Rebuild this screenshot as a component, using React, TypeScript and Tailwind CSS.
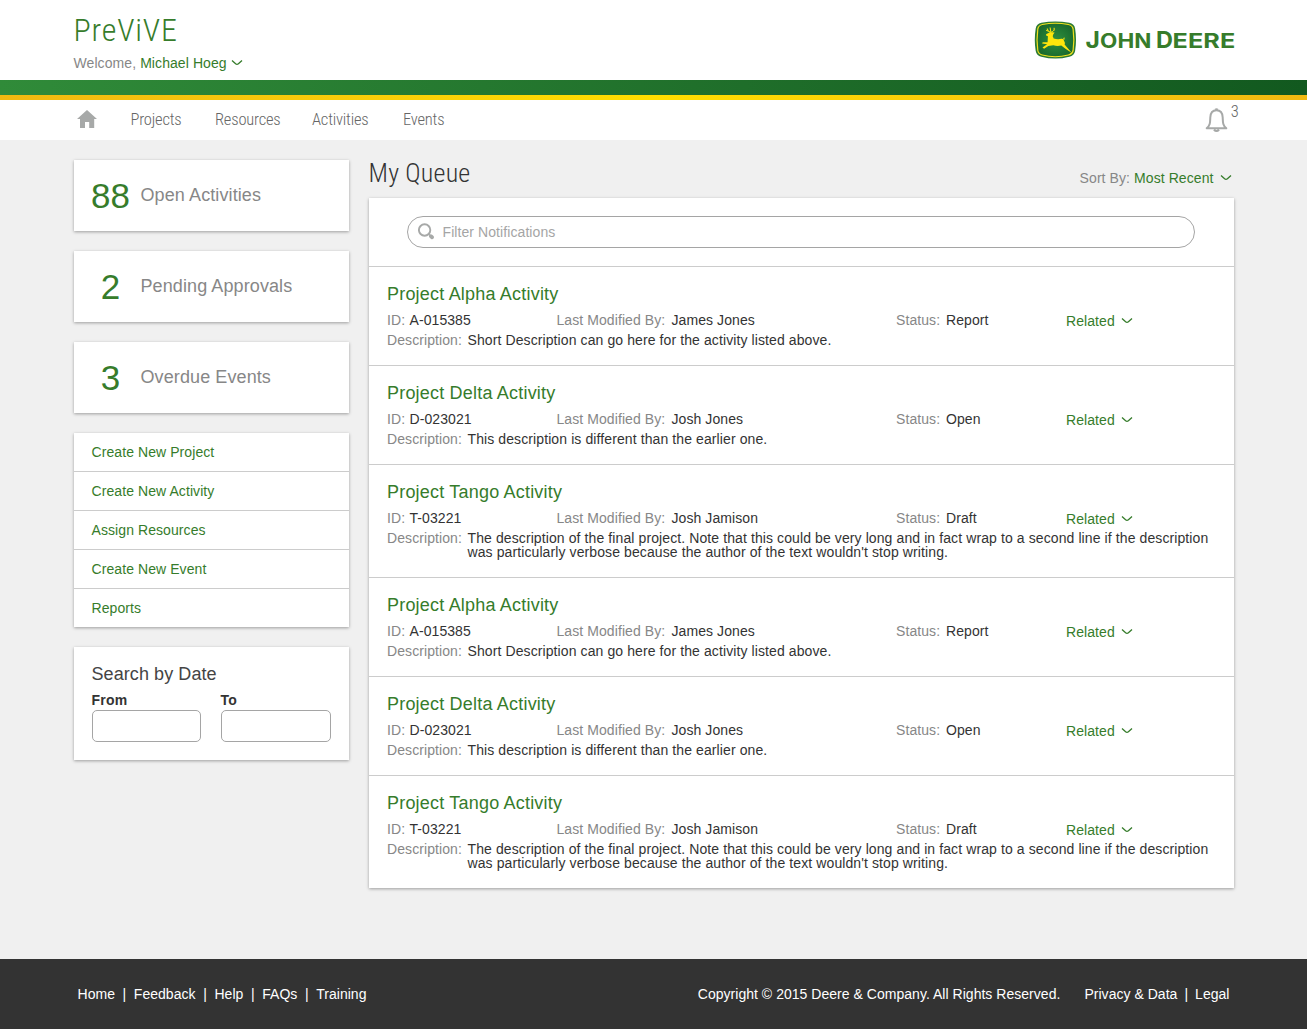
import React from "react";

function Chevron({ className = "" }: { className?: string }) {
  return (
    <svg className={className} width="12" height="8" viewBox="0 0 12 8" fill="none" stroke="#367c2b" strokeWidth="1.3">
      <path d="M1 1.4 L4.6 4.7 Q6 5.9 7.4 4.7 L11 1.4" />
    </svg>
  );
}

function Logo() {
  return (
    <svg width="200" height="38" viewBox="0 0 200 38" className="overflow-visible">
      <defs>
        <radialGradient id="shield" cx="50%" cy="50%" r="60%">
          <stop offset="0" stopColor="#2f8f3d" />
          <stop offset="1" stopColor="#17662c" />
        </radialGradient>
      </defs>
      <g transform="translate(-0.7 0)">
        <path d="M7 1.8 Q21 -1 35 1.8 Q40 2.8 40.8 7.5 Q42.6 19 40.8 30 Q40 34.500 35 35.7 Q21 39.5 7 35.7 Q2.2 34.5 1.4 30 Q-.4 19 1.4 7.5 Q2.2 2.8 7 1.8Z" fill="#2b7a34" />
        <path d="M8 3.5 Q21 1 34 3.5 Q38 4.3 38.800 8 Q40.300 19 38.800 29.5 Q38 33 34 34 Q21 37.5 8 34 Q4.2 33 3.5 29.5 Q2 19 3.5 8 Q4.3 4.3 8 3.5Z" fill="url(#shield)" stroke="#f0e01d" strokeWidth="1.2" />
        <g fill="none" stroke="#ffe60c" strokeWidth="1">
          <path d="M16.6 11.5 Q12.800 10.500 13 7.500 M14.200 10.300 L11.800 9.200 M16.600 11.300 L15.800 6.500 M17 11 Q20.500 10 19.800 6.800 M19.500 9.300 L20.300 9" />
        </g>
        <path d="M11.800 13.300 L15.500 11.300 L18 11.200 L20.300 11.500 L19 13.200 L18.400 15.200 L19.400 17.400 Q23.500 18.800 27 17.700 Q29.500 17.300 29.600 19.500 Q31 21.500 30.300 23.600 L33.300 27 L37.300 31.700 L31.500 28 L27 24.600 Q22.500 25.300 19 24.300 L14 24.900 L9.800 27.700 L8.200 26.400 L12.800 23.300 L7.800 22.600 L8.400 21.200 L13.300 21.200 L13.600 15.200 L11.800 14.600Z" fill="#ffe60c" />
        <path d="M28.700 18.300 L29.900 16 L30.400 18.600Z" fill="#ffe60c" />
      </g>
      <g fill="#367c2b" fontFamily="Inter" fontWeight="650">
        <text x="50.500" y="27.4" fontSize="23.500" textLength="14.500" lengthAdjust="spacingAndGlyphs">J</text>
        <text x="65" y="27.4" fontSize="19.500" textLength="51.500" lengthAdjust="spacingAndGlyphs">OHN</text>
        <text x="121" y="27.4" fontSize="23.500" textLength="17" lengthAdjust="spacingAndGlyphs">D</text>
        <text x="137.500" y="27.4" fontSize="19.500" textLength="62.800" lengthAdjust="spacingAndGlyphs">EERE</text>
      </g>
    </svg>
  );
}

function HomeIcon() {
  return (
    <svg width="20" height="18" viewBox="0 0 20 18" fill="#a7a9a8" className="-mt-[2px]">
      <path d="M10 0 L20 9 H17.200 V18 H12.200 V12 H8 V18 H3 V9 H0Z" />
    </svg>
  );
}

function BellIcon() {
  return (
    <svg width="23" height="25" viewBox="0 0 22 25" fill="none" stroke="#a7a9a8" strokeWidth="2">
      <path d="M1.200 20.300 C4.800 17 4.600 14.500 4.800 9.500 C5 5 7.500 2.300 11 2.300 C14.500 2.300 17 5 17.200 9.500 C17.400 14.500 17.200 17 20.800 20.300Z" strokeLinejoin="round" />
      <path d="M8.500 21.500 Q11 24.500 13.500 21.500" strokeWidth="2.200" />
      <path d="M9.800 1.800 Q11 .5 12.200 1.800" />
    </svg>
  );
}

function SearchIcon() {
  return (
    <svg width="17" height="17" viewBox="0 0 17 17" fill="none" stroke="#a7a9a8" className="-mt-px">
      <circle cx="6.600" cy="7" r="5.700" strokeWidth="1.9" />
      <path d="M10.600 11 L12 12.500" strokeWidth="1.300" />
      <path d="M12.900 13.300 L14.100 14.300" strokeWidth="3.800" strokeLinecap="round" />
    </svg>
  );
}

type Item = { title: string; id: string; by: string; status: string; desc: string };

const activities: Item[] = [
  { title: "Project Alpha Activity", id: "A-015385", by: "James Jones", status: "Report", desc: "Short Description can go here for the activity listed above." },
  { title: "Project Delta Activity", id: "D-023021", by: "Josh Jones", status: "Open", desc: "This description is different than the earlier one." },
  { title: "Project Tango Activity", id: "T-03221", by: "Josh Jamison", status: "Draft", desc: "The description of the final project. Note that this could be very long and in fact wrap to a second line if the description was particularly verbose because the author of the text wouldn't stop writing." },
];
const queue = [...activities, ...activities];

const stats = [
  { count: "88", label: "Open Activities" },
  { count: "2", label: "Pending Approvals" },
  { count: "3", label: "Overdue Events" },
];

const actions = ["Create New Project", "Create New Activity", "Assign Resources", "Create New Event", "Reports"];

const nav = [
  { label: "Projects", width: "w-[84.500px]" },
  { label: "Resources", width: "w-[97px]" },
  { label: "Activities", width: "w-[91px]" },
  { label: "Events", width: "w-[60px]" },
];

const card = "bg-white shadow-[0_1px_3px_rgba(0,0,0,0.35)]";

function QueueItem({ item }: { item: Item }) {
  return (
    <li className="border-t border-[#cccccc] pr-[18px] pl-[18.500px] pt-[17px] pb-[18px] leading-[14px]">
      <h3 className="h-[29px] text-[18px] leading-[20px] tracking-[0.2px] text-[#367c2b]">{item.title}</h3>
      <div className="flex h-[20px] text-[#333333]">
        <div className="flex w-[169.500px]"><span className="w-[22.500px] text-[#878787]">ID:</span>{item.id}</div>
        <div className="flex w-[339.500px]"><span className="w-[115px] text-[#878787]">Last Modified By:</span>{item.by}</div>
        <div className="flex w-[170px]"><span className="w-[50px] text-[#878787]">Status:</span>{item.status}</div>
        <button className="flex h-[14px] translate-y-px items-center gap-[6px] text-[#367c2b]">Related<Chevron /></button>
      </div>
      <div className="flex text-[#333333]">
        <span className="w-[80.500px] shrink-0 text-[#878787]">Description:</span>
        <p className="tracking-[0.1px]">{item.desc}</p>
      </div>
    </li>
  );
}

export default function App() {
  return (
    <div className="flex h-[1029px] w-full flex-col bg-[#f0f0f0] font-['Liberation_Sans',Arial,sans-serif] text-[14px] leading-[14px] tracking-[0.08px]">
      <header className="h-[80px] bg-white">
        <div className="mx-auto flex w-[1160px] justify-between">
          <div>
            <h1 className="pt-[11px] font-['Roboto',sans-serif] text-[32px] leading-[38px] font-light font-stretch-condensed tracking-[0.8px] text-[#367c2b]">PreViVE</h1>
            <div className="mt-[7px] flex items-center text-[#878787]">
              Welcome,<span className="ml-1 text-[#367c2b]">Michael Hoeg</span>
              <Chevron className="ml-[4px]" />
            </div>
          </div>
          <div className="-mr-px pt-[21px]"><Logo /></div>
        </div>
      </header>
      <div className="h-[15px] bg-linear-to-r from-[#308b39] to-[#12591f]" />
      <div className="h-[5px] bg-linear-to-r from-[#f0b911] via-[#ffde00] to-[#f0b911]" />

      <nav className="h-[40px] bg-white">
        <div className="mx-auto flex h-full w-[1160px] items-center font-['Roboto',sans-serif] text-[16.500px] font-light font-stretch-condensed tracking-[-0.2px] text-[#666666]">
          <div className="w-[57px] pl-[3px]"><HomeIcon /></div>
          {nav.map((n) => <a key={n.label} className={n.width}>{n.label}</a>)}
          <div className="-mr-[5px] ml-auto flex gap-[3px]">
            <BellIcon />
            <span className="-mt-[3px]">3</span>
          </div>
        </div>
      </nav>

      <main className="mx-auto flex w-[1160px] flex-1 gap-5 pt-5">
        <aside className="flex w-[275px] flex-col gap-5">
          {stats.map((s) => (
            <section key={s.label} className={`${card} flex h-[71px] items-center pl-[17px]`}>
              <span className="w-[40px] text-center text-[35px] leading-[40px] tracking-normal text-[#367c2b]">{s.count}</span>
              <span className="-mt-[2px] pl-[10px] text-[18px] tracking-[0.1px] text-[#878787]">{s.label}</span>
            </section>
          ))}
          <ul className={`${card} divide-y divide-[#cccccc]`}>
            {actions.map((a, i) => (
              <li key={a} className={`flex items-center px-[18px] text-[#367c2b] ${i === 4 ? "h-[38px]" : "h-[39px]"}`}>{a}</li>
            ))}
          </ul>
          <section className={`${card} h-[113px] px-[18px] pt-[18px]`}>
            <h2 className="text-[18px] leading-[18px] text-[#444444]">Search by Date</h2>
            <div className="mt-[10px] flex gap-5 text-[#333333]">
              <label className="w-[109px] font-bold tracking-[0.2px]">From<input className="mt-[3px] block h-[32px] w-full rounded-[5px] border border-[#a5a5a5] bg-white" /></label>
              <label className="w-[110px] font-bold tracking-[0.2px]">To<input className="mt-[3px] block h-[32px] w-full rounded-[5px] border border-[#a5a5a5] bg-white" /></label>
            </div>
          </section>
        </aside>

        <section className="w-[865px]">
          <div className="flex h-[38px] justify-between">
            <h2 className="-mt-[3px] font-['Roboto',sans-serif] text-[26px] leading-[32px] font-light font-stretch-condensed tracking-[0.2px] text-[#333333]">My Queue</h2>
            <div className="flex h-[36px] items-center pr-[2px] text-[#878787]">
              Sort By:<span className="ml-1 text-[#367c2b]">Most Recent</span>
              <Chevron className="ml-[6px]" />
            </div>
          </div>
          <div className={card}>
            <div className="h-[68px] px-[38px] pt-[18px]">
              <label className="flex h-[32px] w-[788px] items-center gap-[8px] rounded-full border border-[#a5a5a5] pl-[10px]">
                <SearchIcon />
                <input placeholder="Filter Notifications" className="flex-1 bg-transparent outline-none placeholder:text-[#a5a5a5]" />
              </label>
            </div>
            <ul>
              {queue.map((q, i) => <QueueItem key={i} item={q} />)}
            </ul>
          </div>
        </section>
      </main>

      <footer className="h-[70px] bg-[#333333] text-white">
        <div className="mx-auto flex w-[1160px] justify-between px-[4px] pt-[28px] tracking-[0.03px]">
          <div className="flex gap-[7.600px]"><a>Home</a>|<a>Feedback</a>|<a>Help</a>|<a>FAQs</a>|<a>Training</a></div>
          <div className="flex gap-[7px]">
            <span className="mr-[17px]">Copyright © 2015 Deere &amp; Company. All Rights Reserved.</span>
            <a>Privacy &amp; Data</a>|<a>Legal</a>
          </div>
        </div>
      </footer>
    </div>
  );
}
